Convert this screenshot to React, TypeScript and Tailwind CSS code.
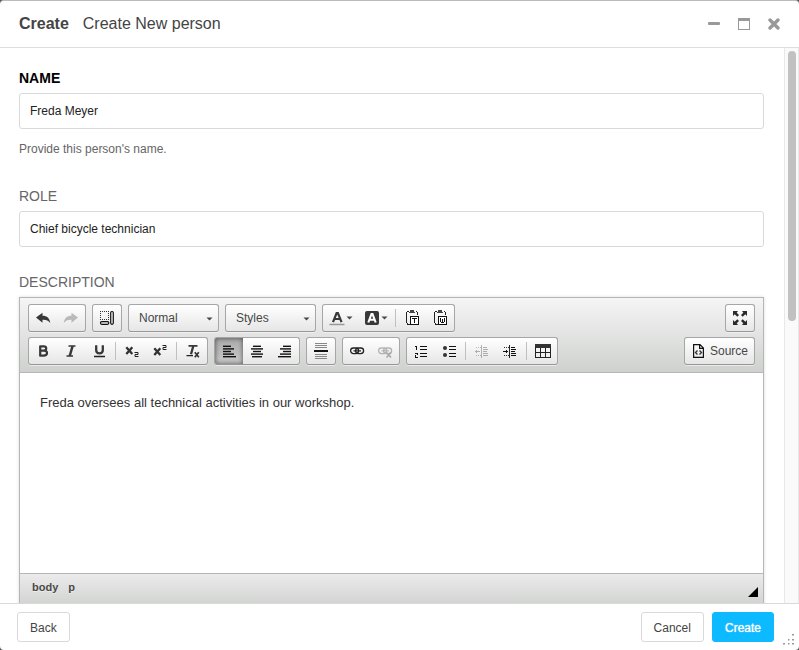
import React from "react";

type Kids = { children: React.ReactNode };

function Icon({ children, crisp = true }: Kids & { crisp?: boolean }) {
  return (
    <svg
      width="16"
      height="16"
      viewBox="0 0 16 16"
      fill="none"
      className="block shrink-0"
      shapeRendering={crisp ? "crispEdges" : "auto"}
      aria-hidden="true"
    >
      {children}
    </svg>
  );
}

function Group({ children }: Kids) {
  return (
    <div className="flex h-7 overflow-hidden rounded-[3px] border border-[#a6a6a6] border-b-[#979797] bg-linear-to-b from-white to-[#e6e6e6] shadow-[0_1px_0_rgba(255,255,255,.5),0_0_2px_rgba(255,255,255,.15)_inset]">
      {children}
    </div>
  );
}

function Tool({ label, children, off, on, arrow }: Kids & { label: string; off?: boolean; on?: boolean; arrow?: boolean }) {
  return (
    <button
      type="button"
      title={label}
      aria-label={label}
      aria-pressed={on}
      disabled={off}
      className={
        "flex items-center " +
        (arrow ? "w-[35px] pl-1.5 " : "w-7 justify-center ") +
        (off ? "opacity-30 " : "") +
        (on ? "bg-linear-to-b from-[#aaa] to-[#cacaca] shadow-[0_0_5px_rgba(0,0,0,.6)_inset]" : "")
      }
    >
      {children}
      {arrow && (
        <svg width="7" height="4" viewBox="0 0 7 4" className="ml-px block" aria-hidden="true">
          <path d="M0.500 0.500h6L3.500 3.500z" fill="#474747" />
        </svg>
      )}
    </button>
  );
}

function Separator() {
  return <span className="mx-0.5 my-1 w-px bg-[#c0c0c0]" />;
}

function Combo({ label, value }: { label: string; value: string }) {
  return (
    <div className="relative">
      <Group>
        <select
          aria-label={label}
          className="w-[89px] appearance-none bg-transparent pl-2.5 text-xs text-[#474747] outline-none"
        >
          <option>{value}</option>
        </select>
      </Group>
      <svg width="7" height="4" viewBox="0 0 7 4" className="pointer-events-none absolute top-[13px] right-1.5" aria-hidden="true">
        <path d="M0.500 0.500h6L3.500 3.500z" fill="#474747" />
      </svg>
    </div>
  );
}

function Bars({ rows, color = "#111" }: { rows: number[][]; color?: string }) {
  return (
    <>
      {rows.map(([x, y, w, h = 1], i) => (
        <rect key={i} x={x} y={y} width={w} height={h} fill={color} />
      ))}
    </>
  );
}

const clipboard = (
  <>
    <path d="M4.500 1.500H3.500L2.500 2.500V12.500L4 14.500H5.500M11.500 1.500H12.500L13.500 2.500V5" stroke="#222" />
    <path d="M5 2h1V0h4v2h1v1H5z" fill="#444" />
    <path d="M6.500 6.500H14.500V14.500H6.500z" fill="#fff" stroke="#111" />
  </>
);

const chain = (
  <>
    <rect x="1.600" y="5" width="8" height="5.600" rx="2.800" stroke="#222" strokeWidth="1.300" />
    <rect x="6.600" y="5" width="8" height="5.600" rx="2.800" stroke="#222" strokeWidth="1.300" />
    <path d="M4.500 7.800h7.500" stroke="#222" strokeWidth="1.200" />
  </>
);

const indentText = (
  <>
    <path d="M7.500 2v13" stroke="#222" />
    <Bars rows={[[9, 4, 4], [9, 6, 5], [9, 8, 4], [9, 10, 5], [9, 12, 5]]} />
    <path d="M2 4.500h5M2 12.500h5" stroke="#333" strokeDasharray="1 1" />
  </>
);

function Toolbar() {
  return (
    <div className="flex flex-col gap-[5px] border-b border-[#b6b6b6] bg-linear-to-b from-[#f5f5f5] to-[#cfd1cf] px-2 pt-1.5 pb-[7px]">
      <div className="flex gap-1.5">
        <Group>
          <Tool label="Undo">
            <Icon crisp={false}>
              <path d="M1 7.500L7.500 2.700v3c4.500 0 7.300 2.500 7.700 7.300-2-2.500-4-3.500-7.700-3.300v3z" fill="#383838" />
            </Icon>
          </Tool>
          <Tool label="Redo" off>
            <Icon crisp={false}>
              <path d="M15 7.500L8.500 2.700v3C4 5.700 1.200 8.200 0.800 13c2-2.500 4-3.500 7.700-3.300v3z" fill="#383838" />
            </Icon>
          </Tool>
        </Group>
        <Group>
          <Tool label="Show Blocks">
            <Icon>
              <path d="M1 1.500h9M1 9.500h9M1.500 1v9M9.500 1v9" stroke="#333" strokeDasharray="1 1" />
              <rect x="11.700" y="1.500" width="2.600" height="12.800" rx="1.200" stroke="#111" strokeWidth="1.200" shapeRendering="auto" />
              <rect x="1.500" y="11.600" width="8.300" height="2.700" rx="1.200" stroke="#111" strokeWidth="1.200" shapeRendering="auto" />
            </Icon>
          </Tool>
        </Group>
        <Combo label="Paragraph Format" value="Normal" />
        <Combo label="Styles" value="Styles" />
        <Group>
          <Tool label="Text Color" arrow>
            <Icon crisp={false}>
              <path d="M4 12.200L7.600 3h1.300L12.500 12.200M5.500 9h5.500" stroke="#383838" strokeWidth="2.200" />
              <path d="M0.500 14.500h15" stroke="#999" strokeWidth="1.300" />
            </Icon>
          </Tool>
          <Tool label="Background Color" arrow>
            <Icon crisp={false}>
              <rect x="1" y="1" width="14" height="14" rx="2" fill="#383838" />
              <path d="M4.300 12.500L7.500 4h1l3.200 8.500M5.500 9.700h5" stroke="#fff" strokeWidth="2.100" />
            </Icon>
          </Tool>
          <Separator />
          <Tool label="Paste as plain text">
            <Icon>
              {clipboard}
              <path d="M8 8.500h5M10.500 8v5" stroke="#111" />
            </Icon>
          </Tool>
          <Tool label="Paste from Word">
            <Icon>
              {clipboard}
              <path d="M8.500 8v4M10.500 9v4M12.500 8v4M9 12.500h3" stroke="#111" />
            </Icon>
          </Tool>
        </Group>
        <div className="ml-auto">
          <Group>
            <Tool label="Maximize">
              <Icon crisp={false}>
                <path d="M1 1h5L4.700 2.700 7 5 5.300 6.700 2.700 4.300 1 6zM15 1v5l-1.700-1.700L10.700 6.700 9 5l2.300-2.300L10 1zM1 15v-5l1.700 1.700L5.300 9.300 7 11 4.700 13.300 6 15zM15 15h-5l1.300-1.700L9 11l1.700-1.700 2.600 2.400L15 10z" fill="#2a2a2a" />
              </Icon>
            </Tool>
          </Group>
        </div>
      </div>
      <div className="flex gap-1.5">
        <Group>
          <Tool label="Bold">
            <Icon crisp={false}>
              <path d="M5.200 3.400h3.600c3.200 0 3.200 4.200 0 4.200H5.200m3.600 0c4.300 0 4.300 5 0 5H5.200M5.200 2.400v11.200" stroke="#383838" strokeWidth="2.200" />
            </Icon>
          </Tool>
          <Tool label="Italic">
            <Icon crisp={false}>
              <path d="M5.500 3.100h7M3.500 12.900h6.500" stroke="#383838" strokeWidth="1.500" />
              <path d="M9.600 3L6.700 13" stroke="#383838" strokeWidth="2.500" />
            </Icon>
          </Tool>
          <Tool label="Underline">
            <Icon crisp={false}>
              <path d="M5.200 2.300v5c0 4 6.600 4 6.600 0v-5" stroke="#383838" strokeWidth="2.300" />
              <path d="M3 13.500h11" stroke="#222" strokeWidth="1.300" />
            </Icon>
          </Tool>
          <Separator />
          <Tool label="Subscript">
            <Icon crisp={false}>
              <path d="M2.300 4.200l6 6.800M8.300 4.200L2.300 11" stroke="#333" strokeWidth="2.300" />
              <path d="M10.500 9.500h3.500v2h-3v2H14.500" stroke="#222" />
            </Icon>
          </Tool>
          <Tool label="Superscript">
            <Icon crisp={false}>
              <path d="M2.300 5.200l6 6.800M8.300 5.200L2.300 12" stroke="#333" strokeWidth="2.300" />
              <path d="M10.500 2.500h3.500v2h-3v2H14.500" stroke="#222" />
            </Icon>
          </Tool>
          <Separator />
          <Tool label="Remove Format">
            <Icon crisp={false}>
              <path d="M3.500 2.800h9" stroke="#383838" strokeWidth="1.700" />
              <path d="M8.300 3L6 11.300" stroke="#383838" strokeWidth="2.300" />
              <path d="M1.500 12.700h6.500" stroke="#222" strokeWidth="1.300" />
              <path d="M9.800 9.300l4 5M13.800 9.300l-4 5" stroke="#333" strokeWidth="1.700" />
            </Icon>
          </Tool>
        </Group>
        <Group>
          <Tool label="Align Left" on>
            <Icon crisp={false}>
              <Bars rows={[[2, 2.6, 8, 1.4], [2, 5.2, 11, 1.4], [2, 7.8, 8, 1.4], [2, 10.4, 11, 1.4], [2, 13, 13, 1.4]]} />
            </Icon>
          </Tool>
          <Tool label="Center">
            <Icon crisp={false}>
              <Bars rows={[[4, 2.6, 8, 1.4], [2, 5.2, 12, 1.4], [4, 7.8, 8, 1.4], [2, 10.4, 12, 1.4], [3, 13, 10, 1.4]]} />
            </Icon>
          </Tool>
          <Tool label="Align Right">
            <Icon crisp={false}>
              <Bars rows={[[6, 2.6, 8, 1.4], [3, 5.2, 11, 1.4], [6, 7.8, 8, 1.4], [3, 10.4, 11, 1.4], [1, 13, 13, 1.4]]} />
            </Icon>
          </Tool>
        </Group>
        <Group>
          <Tool label="Insert Horizontal Line">
            <Icon>
              <Bars color="#888" rows={[[2, 0, 12], [2, 2, 12], [2, 4, 12], [2, 11, 12], [2, 13, 12], [2, 15, 12]]} />
              <Bars rows={[[1, 7, 14, 2]]} />
            </Icon>
          </Tool>
        </Group>
        <Group>
          <Tool label="Link">
            <Icon crisp={false}>{chain}</Icon>
          </Tool>
          <Tool label="Unlink" off>
            <Icon crisp={false}>
              {chain}
              <path d="M9.500 9.500l4.500 5M14 9.500l-4.500 5" stroke="#111" strokeWidth="1.800" />
            </Icon>
          </Tool>
        </Group>
        <Group>
          <Tool label="Numbered List">
            <Icon>
              <path d="M2 3.500h2M3.500 3v4M2 10.500h3M4.500 10v2M2 12.500h1M2.500 12v2M2 14.500h3" stroke="#111" />
              <Bars rows={[[7, 3, 7], [7, 6, 7], [7, 10, 7], [7, 13, 7]]} />
            </Icon>
          </Tool>
          <Tool label="Bulleted List">
            <Icon>
              <circle cx="4" cy="5" r="2" fill="#333" shapeRendering="auto" />
              <circle cx="4" cy="12" r="2" fill="#333" shapeRendering="auto" />
              <Bars rows={[[8, 3, 7], [8, 6, 7], [8, 10, 7], [8, 13, 7]]} />
            </Icon>
          </Tool>
          <Separator />
          <Tool label="Decrease Indent" off>
            <Icon>
              <path d="M1 8.500h5M2.500 7v3" stroke="#111" />
              {indentText}
            </Icon>
          </Tool>
          <Tool label="Increase Indent">
            <Icon>
              <path d="M1 8.500h5M4.500 7v3" stroke="#111" />
              {indentText}
            </Icon>
          </Tool>
          <Separator />
          <Tool label="Table">
            <Icon>
              <rect x="0" y="1" width="16" height="4" fill="#333" />
              <path d="M0.500 4v10.500h15V4M0 9.500h16M5.500 5v9M10.500 5v9" stroke="#222" />
            </Icon>
          </Tool>
        </Group>
        <div className="ml-auto">
          <Group>
            <button type="button" className="flex items-center gap-[3px] px-1.5 text-xs text-[#474747]">
              <Icon crisp={false}>
                <path d="M2.600 1.600h6.400l3.400 3.400v9.400h-9.800zM8.600 1.600v3.800h3.800" stroke="#111" strokeWidth="1.200" />
                <path d="M6.500 7.500L4.500 9.500l2 2M8.500 7.500l2 2-2 2" stroke="#333" strokeWidth="1.400" />
              </Icon>
              Source
            </button>
          </Group>
        </div>
      </div>
    </div>
  );
}

const inputClass =
  "mt-[5px] block h-9 w-full rounded-[3px] border border-[#d9d9d9] bg-white px-2.5 text-xs text-[#222] outline-none";
const footerButton = "h-[30px] rounded-[3px] border px-3 pt-0.5 text-xs";

export default function App() {
  return (
    <div className="h-screen bg-[#555] font-['Liberation_Sans',Arial,sans-serif]">
      <div className="flex h-full flex-col overflow-hidden rounded-[4px] border-t border-[#bbb] bg-white">
        <header className="flex h-[47px] shrink-0 items-center border-b border-[#ddd] px-[19px] text-base text-[#444]">
          <h1 className="flex grow gap-3.5">
            <span className="font-bold">Create</span>
            <span>Create New person</span>
          </h1>
          <div className="flex gap-[18px]">
            <button type="button" aria-label="Minimize">
              <svg width="12" height="12" viewBox="0 0 12 12" className="block">
                <rect x="0" y="4" width="12" height="3" rx="1" fill="#999" />
              </svg>
            </button>
            <button type="button" aria-label="Maximize window">
              <svg width="12" height="12" viewBox="0 0 12 12" className="block" fill="#999">
                <path d="M0 0h12v12H0zM1 3v8h10V3z" fillRule="evenodd" />
              </svg>
            </button>
            <button type="button" aria-label="Close">
              <svg width="12" height="12" viewBox="0 0 12 12" className="block">
                <path d="M2 2l8 8M10 2l-8 8" stroke="#999" strokeWidth="3.400" strokeLinecap="round" />
              </svg>
            </button>
          </div>
        </header>

        <div className="flex min-h-0 grow">
          <main className="grow overflow-hidden px-[19px] pt-5 pr-5">
            <label htmlFor="name" className="block text-sm leading-5 font-bold text-black">
              NAME
            </label>
            <input id="name" defaultValue="Freda Meyer" className={inputClass} />
            <p className="mt-2 text-xs leading-6 text-[#666]">Provide this person's name.</p>

            <label htmlFor="role" className="mt-[25px] block text-sm leading-5 text-[#666]">
              ROLE
            </label>
            <input id="role" defaultValue="Chief bicycle technician" className={inputClass} />

            <label htmlFor="description" className="mt-[25px] block text-sm leading-5 text-[#666]">
              DESCRIPTION
            </label>
            <div className="mt-[5px] border border-[#b6b6b6] shadow-[0_0_3px_rgba(0,0,0,.15)]">
              <Toolbar />
              <textarea
                id="description"
                defaultValue="Freda oversees all technical activities in our workshop."
                className="block h-[200px] w-full resize-none bg-white p-5 text-[13px] leading-5 text-[#333] outline-none"
              />
              <div className="flex h-[34px] items-start justify-between border-t border-[#b6b6b6] bg-linear-to-b from-[#ebebeb] to-[#cfd1cf] pt-[5px] pr-[5px] pl-3">
                <div className="flex gap-2.5 text-[11px] leading-4 font-bold text-[#484848] [text-shadow:0_1px_0_rgba(255,255,255,.5)]">
                  <span>body</span>
                  <span>p</span>
                </div>
                <svg width="10" height="10" viewBox="0 0 10 10" className="mt-2 block" aria-hidden="true">
                  <path d="M10 0v10H0z" fill="#000" />
                </svg>
              </div>
            </div>
          </main>
          <div className="w-[15px] shrink-0 border-x border-[#e8e8e8] bg-[#fafafa] px-[3px] pt-[3px]">
            <div className="h-[49%] w-2 rounded-full bg-[#c1c1c1]" />
          </div>
        </div>

        <footer className="relative flex h-[47px] shrink-0 items-start gap-2 border-t border-[#d9d9d9] pt-2 pr-[25px] pl-[17px]">
          <button type="button" className={footerButton + " mr-auto border-[#d9d9d9] text-[#444]"}>
            Back
          </button>
          <button type="button" className={footerButton + " border-[#d9d9d9] text-[#444]"}>
            Cancel
          </button>
          <button type="button" className={footerButton + " border-[#0dbaff] bg-[#0dbaff] text-white [text-shadow:0_0_1px_white]"}>
            Create
          </button>
          <svg width="12" height="12" viewBox="0 0 12 12" className="absolute right-1 bottom-1" fill="#999" aria-hidden="true">
            <path d="M9 0h2v1.500h-2zM5 5h1.500v1.500H5zM9 5h2v1.500h-2zM0 9h2v1.500H0zM5 9h1.500v1.500H5zM9 9h2v1.500h-2z" />
          </svg>
        </footer>
      </div>
    </div>
  );
}
